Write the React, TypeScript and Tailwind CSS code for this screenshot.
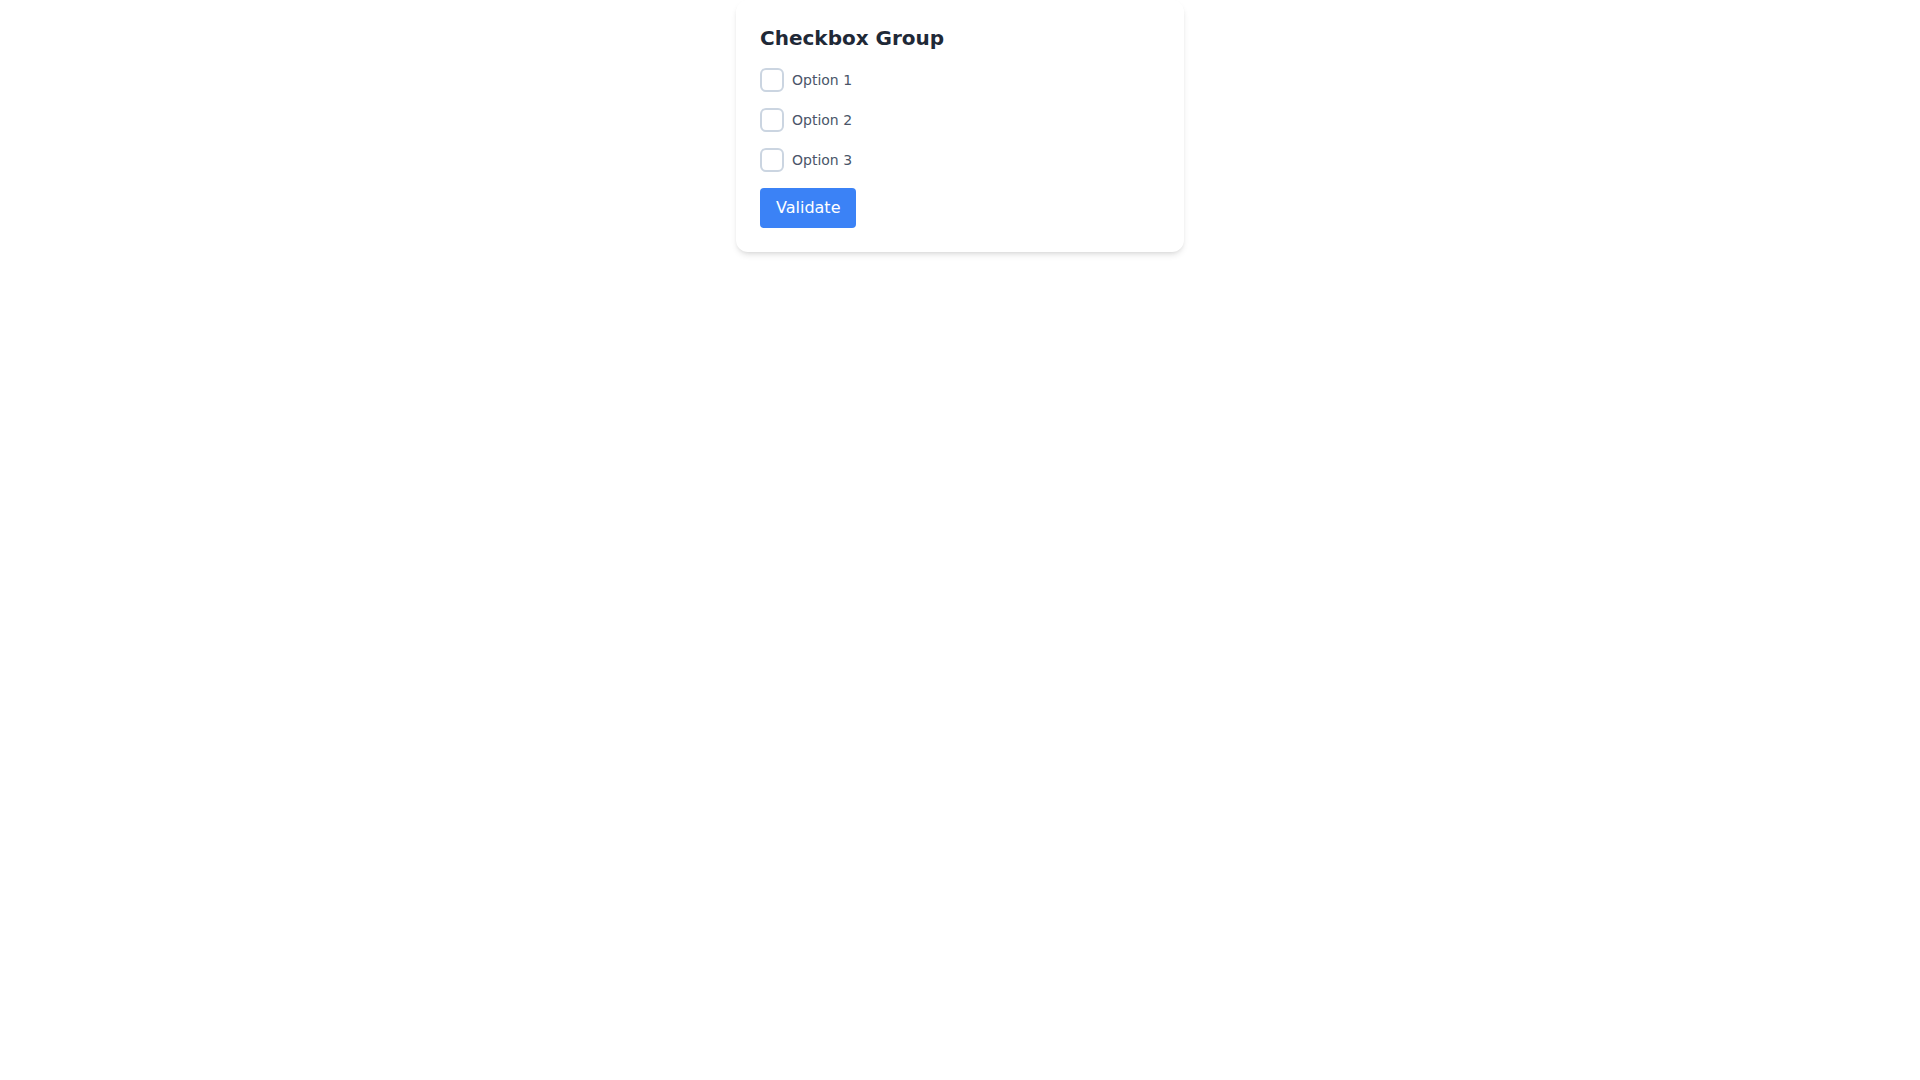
import React, { useState } from "react";

export default function App() {
  const [checked, setChecked] = useState<boolean[]>([false, false, false]);
  return (
    <div className="min-h-screen w-full bg-white flex justify-center" style={{ fontFamily: '"DejaVu Sans", sans-serif' }}>
      <div className="w-[448px] h-fit bg-white rounded-xl shadow-md p-6">
        <h2 className="text-xl font-bold text-[#1f2937] mb-4">Checkbox Group</h2>
        <div className="flex flex-col gap-4">
          {["Option 1", "Option 2", "Option 3"].map((label, i) => (
            <label key={label} className="flex items-center cursor-pointer">
              <span
                onClick={() => setChecked((c) => c.map((v, j) => (j === i ? !v : v)))}
                className={`w-6 h-6 rounded-md border-2 ${checked[i] ? "border-[#3b82f6] bg-[#3b82f6]" : "border-[#cbd5e1] bg-white"}`}
              />
              <span className="ml-2 text-sm text-[#4a5568]">{label}</span>
            </label>
          ))}
        </div>
        <button className="mt-4 px-4 py-2 bg-[#3b82f6] text-white text-base rounded">Validate</button>
      </div>
    </div>
  );
}
